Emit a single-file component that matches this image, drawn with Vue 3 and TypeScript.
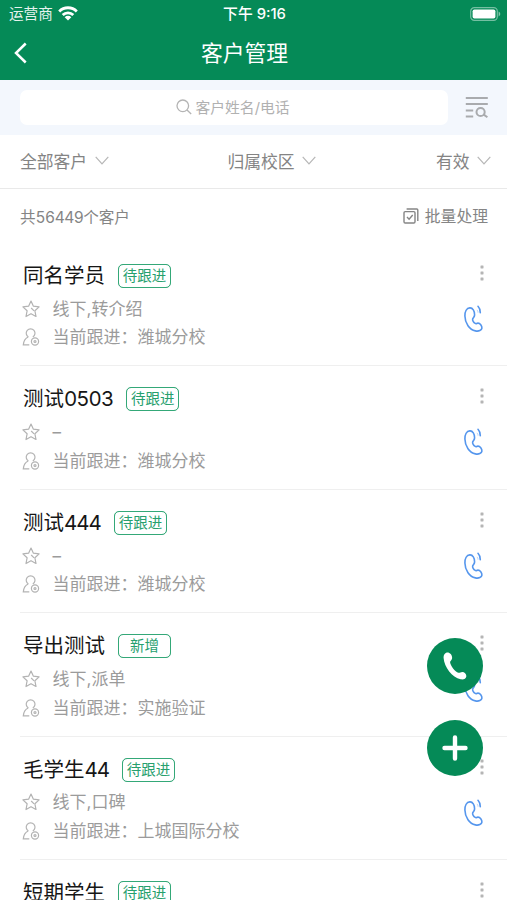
<script setup lang="ts">
interface Customer {
  name: string
  status: string
  source: string
  campus: string
}

const filters: string[] = ['全部客户', '归属校区', '有效']

const customers: Customer[] = [
  { name: '同名学员', status: '待跟进', source: '线下,转介绍', campus: '潍城分校' },
  { name: '测试0503', status: '待跟进', source: '–', campus: '潍城分校' },
  { name: '测试444', status: '待跟进', source: '–', campus: '潍城分校' },
  { name: '导出测试', status: '新增', source: '线下,派单', campus: '实施验证' },
  { name: '毛学生44', status: '待跟进', source: '线下,口碑', campus: '上城国际分校' },
  { name: '短期学生', status: '待跟进', source: '线下,转介绍', campus: '潍城分校' },
]

const label = (name: string): string => name.replace(/\d+$/, '')
const digits = (name: string): string => name.match(/\d+$/)?.[0] ?? ''
</script>

<template>
  <div class="screen">
    <header class="header">
      <div class="status-bar">
        <div class="carrier">
          <span>运营商</span>
          <svg class="wifi" width="20" height="15" viewBox="0 0 20 15">
            <g fill="none" stroke="#fff" stroke-width="2.8">
              <path d="M1.2 5.4a12.4 12.4 0 0 1 17.6 0" />
              <path d="M4.7 9a7.5 7.5 0 0 1 10.6 0" />
            </g>
            <path d="M10 14.5 6.7 11.2a4.7 4.7 0 0 1 6.6 0z" fill="#fff" />
          </svg>
        </div>
        <div class="clock">下午 9:16</div>
        <svg class="battery" width="31" height="14" viewBox="0 0 31 14">
          <rect x=".7" y=".7" width="26.6" height="12.6" rx="3.6" fill="none" stroke="#fff" stroke-opacity=".45" stroke-width="1.2" />
          <rect x="2.6" y="2.5" width="22.8" height="9" rx="1.8" fill="#fff" />
          <path d="M28.6 4.6c2.2.8 2.2 4 0 4.8z" fill="#fff" fill-opacity=".5" />
        </svg>
      </div>
      <div class="nav-bar">
        <svg class="back" width="14" height="22" viewBox="0 0 14 22">
          <path d="M11.7 1.5 2 11l9.7 9.5" fill="none" stroke="#fff" stroke-width="2.5" />
        </svg>
        <h1>客户管理</h1>
      </div>
    </header>

    <div class="search-row">
      <div class="search-box">
        <svg width="16" height="16" viewBox="0 0 16 16" fill="none" stroke="#b4b4b4" stroke-width="1.3">
          <circle cx="6.8" cy="6.8" r="5.8" />
          <path d="m11 11 4.2 4" />
        </svg>
        <span>客户姓名/电话</span>
      </div>
      <svg class="filter-icon" width="24" height="23" viewBox="0 0 24 23" fill="none" stroke="#a9abae" stroke-width="2">
        <path d="M.8 2h22M.8 8h22M.8 14.4h7.4M.8 20.5h7.4" />
        <circle cx="15.6" cy="16" r="4.1" />
        <path d="m18.4 18.4 4 2.8" />
      </svg>
    </div>

    <nav class="filters">
      <div v-for="filter in filters" :key="filter" class="filter">
        <span>{{ filter }}</span>
        <svg width="14" height="9" viewBox="0 0 14 9">
          <path d="m.7.9 6.3 7 6.3-7" fill="none" stroke="#b6b6b6" stroke-width="1.2" />
        </svg>
      </div>
    </nav>

    <div class="summary">
      <span class="total">共<span class="count">56449</span>个客户</span>
      <div class="batch">
        <svg width="16" height="16" viewBox="0 0 16 16" fill="none" stroke="#858585" stroke-width="1.4">
          <rect x="1" y="3.6" width="11" height="11.4" rx="1.2" />
          <path d="M3.6 1h10.2c.6 0 1 .4 1 1v11M4 9l2.1 2.2L9.7 7" />
        </svg>
        <span>批量处理</span>
      </div>
    </div>

    <main class="list">
      <article v-for="customer in customers" :key="customer.name" class="card">
        <div class="details">
          <div class="title-line">
            <h2>{{ label(customer.name) }}<span class="digits">{{ digits(customer.name) }}</span></h2>
            <span class="tag">{{ customer.status }}</span>
          </div>
          <div class="info">
            <svg width="18" height="18" viewBox="0 0 18 18" fill="none" stroke="#b3b3b3" stroke-width="1.2" stroke-linejoin="round">
              <path d="m9 1 2.4 5.2 5.7.7-4.2 3.9 1.1 5.7L9 13.700l-5 2.800 1.100-5.700L.9 6.900l5.700-.7z" />
              <path d="m9.200 8 2.900 2.900" />
            </svg>
            <span>{{ customer.source }}</span>
          </div>
          <div class="info">
            <svg width="18" height="18" viewBox="0 0 18 18" fill="none" stroke="#b3b3b3" stroke-width="1.2">
              <path d="M6.400 9A4.400 4.400 0 1 1 10.800 9M6.400 9C3.400 10.200 1.600 13 1.300 16.900h6" />
              <circle cx="13" cy="13.500" r="3.600" />
              <circle cx="13" cy="13.500" r="1" />
            </svg>
            <span>当前跟进：{{ customer.campus }}</span>
          </div>
        </div>
        <div class="actions">
          <svg class="more" width="4" height="16" viewBox="0 0 4 16" fill="#b5b5b5">
            <rect x=".5" y=".5" width="3" height="3" rx=".4" />
            <rect x=".5" y="6.5" width="3" height="3" rx=".4" />
            <rect x=".5" y="12.5" width="3" height="3" rx=".4" />
          </svg>
          <svg class="call" width="20" height="28" viewBox="0 0 20 28" fill="none" stroke="#5596ed" stroke-width="1.6" stroke-linecap="round" stroke-linejoin="round">
            <path d="M5.800 2.900C2.600 3.200.8 6.700.9 11c.1 7.300 4.600 13.700 10.500 14.900 3.400.7 6.300-.6 6.500-2.800.2-2.300-1.900-5.100-4-5-1.300.1-1.600.9-2.700.3-1.600-.8-3-3.200-2.500-4.500.5-1.200 1.800-1.800 1.900-4C10.800 6 8.600 2.600 5.800 2.900z" />
            <path d="M14 1.300c1.700 1.800 2.500 4.100 2.300 6.500" />
            <path d="M13.200 5.200c.6.700.8 1.300.8 2.100" stroke-width="1" stroke-opacity=".4" />
          </svg>
        </div>
      </article>
    </main>

    <div class="floating">
      <button class="fab" aria-label="拨号">
        <svg width="24" height="28" viewBox="0 0 24 28" fill="#fff">
          <path d="M3.2.8C1.400 1.600.4 3.400.6 6c.7 9.400 8.600 19.400 17 21.300 3 .6 5.300-.6 5.700-2.900.3-2.200-1.700-4.500-4-4.500-1.700 0-2.600 1.200-3.900.9C12.200 20 7.200 13.200 7.100 10.200 7.100 8.800 8.900 8 9.100 6.200 9.500 2.900 6.200-.4 3.200.8z" />
        </svg>
      </button>
      <button class="fab" aria-label="新增">
        <svg width="26" height="26" viewBox="0 0 26 26">
          <path d="M13 2.500v21M2.500 13h21" fill="none" stroke="#fff" stroke-width="4.400" stroke-linecap="round" />
        </svg>
      </button>
    </div>
  </div>
</template>

<style>
body {
  margin: 0;
  overflow: hidden;
}
</style>

<style scoped>
.screen {
  width: 507px;
  height: 900px;
  overflow: hidden;
  position: relative;
  display: flex;
  flex-direction: column;
  background: #fff;
  font-family: Inter, "Noto Sans CJK SC", sans-serif;
}

svg {
  display: block;
  flex: none;
}

h1,
h2 {
  margin: 0;
  font-weight: 400;
}

.header {
  flex: none;
  height: 80px;
  background: #058a57;
  color: #fff;
}

.status-bar {
  height: 27px;
  display: grid;
  grid-template-columns: 1fr auto 1fr;
  align-items: center;
  padding: 0 6px 0 9px;
}

.carrier {
  display: flex;
  align-items: center;
  gap: 5px;
  font-size: 14.6px;
  line-height: 26px;
}

.carrier span {
  opacity: 0.9;
}

.clock {
  margin-right: 1px;
  font-size: 14.8px;
  font-weight: 500;
  line-height: 26px;
}

.battery {
  justify-self: end;
}

.nav-bar {
  height: 52px;
  display: grid;
  grid-template-columns: 1fr auto 1fr;
  align-items: center;
  padding: 0 32px 0 14px;
}

h1 {
  font-size: 21.8px;
  line-height: 50px;
}

.search-row {
  flex: none;
  height: 55px;
  box-sizing: border-box;
  display: flex;
  align-items: center;
  justify-content: space-between;
  padding: 0 18px 0 20px;
  background: #f3f7fd;
}

.search-box {
  width: 428px;
  height: 35px;
  box-sizing: border-box;
  padding: 0 2px 2px 0;
  display: flex;
  align-items: center;
  justify-content: center;
  gap: 3px;
  border-radius: 7px;
  background: #fff;
  color: #b1b1b1;
  font-size: 14.8px;
}

.filters {
  flex: none;
  height: 54px;
  box-sizing: border-box;
  display: flex;
  align-items: center;
  justify-content: space-between;
  padding: 0 16px 2px 20px;
  border-bottom: 1px solid #e9e9e9;
  color: #848484;
  font-size: 16.8px;
}

.filter {
  display: flex;
  align-items: center;
  gap: 7.5px;
}

.filter:nth-child(2) {
  margin-left: -1px;
}

.summary {
  flex: none;
  height: 54px;
  box-sizing: border-box;
  padding: 0 19px 1px 20px;
  display: flex;
  align-items: center;
  justify-content: space-between;
  color: #858585;
  font-size: 15.6px;
}

.count {
  font-variant-numeric: tabular-nums;
  letter-spacing: -0.6px;
}

.batch {
  display: flex;
  align-items: center;
  gap: 6px;
  font-size: 15.8px;
}

.list {
  flex: none;
}

.card {
  height: 123.4px;
  box-sizing: border-box;
  margin-left: 20px;
  padding: 16px 0 0 3px;
  display: flex;
  justify-content: space-between;
  border-bottom: 1px solid #efefef;
}

.title-line {
  height: 34px;
  display: flex;
  align-items: center;
  gap: 13px;
}

h2 {
  color: #161616;
  font-size: 20.5px;
  line-height: 34px;
}

.digits {
  font-variant-numeric: tabular-nums;
  letter-spacing: -1px;
}

.tag {
  width: 53px;
  height: 24px;
  box-sizing: border-box;
  border: 1.5px solid #35a878;
  border-radius: 5px;
  outline: 0.5px solid #35a87870;
  outline-offset: -1.5px;
  color: #27a06e;
  font-size: 14.5px;
  line-height: 22px;
  text-align: center;
}

.info {
  height: 28.6px;
  margin-left: -1px;
  display: flex;
  align-items: center;
  gap: 12.6px;
  color: #9b9b9b;
  font-size: 17px;
  line-height: 28px;
}

.title-line + .info {
  padding-top: 1.5px;
}

.actions {
  display: flex;
  flex-direction: column;
  align-items: flex-end;
  padding: 6px 23px 0 0;
}

.call {
  margin-top: 24px;
}

.floating {
  position: absolute;
  top: 638px;
  right: 24px;
  display: flex;
  flex-direction: column;
  gap: 26px;
}

.fab {
  width: 56px;
  height: 56px;
  padding: 0;
  display: flex;
  align-items: center;
  justify-content: center;
  border: 0;
  border-radius: 50%;
  background: #058a57;
}
</style>
